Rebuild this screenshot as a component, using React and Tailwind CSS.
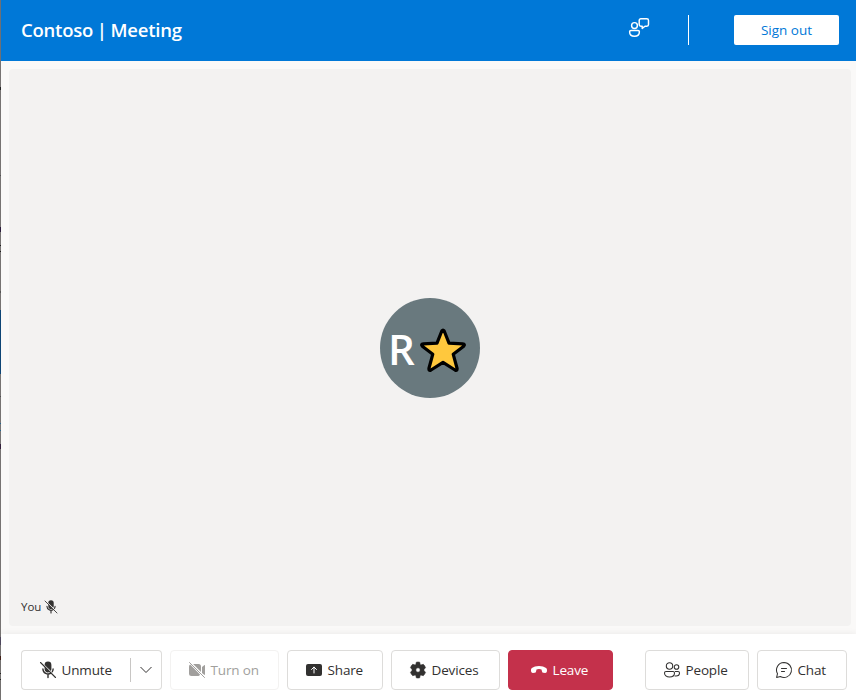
import React from "react";

const edgeMarks = [
  [0, 61, "#6d7075"],
  [61, 26, "#777473"],
  [87, 3, "#252525"],
  [90, 85, "#777473"],
  [175, 1, "#525252"],
  [176, 51, "#777473"],
  [227, 5, "#2b1c3c"],
  [232, 13, "#777473"],
  [245, 1, "#1c1c1c"],
  [246, 5, "#777473"],
  [251, 1, "#1c1c1c"],
  [252, 39, "#777473"],
  [291, 2, "#555555"],
  [293, 17, "#777473"],
  [310, 64, "#0f4676"],
  [374, 22, "#777473"],
  [396, 1, "#505050"],
  [397, 26, "#777473"],
  [423, 1, "#24658f"],
  [424, 6, "#777473"],
  [430, 1, "#24658f"],
  [431, 13, "#777473"],
  [444, 5, "#33203b"],
  [449, 188, "#777473"],
  [637, 8, "#514a60"],
  [645, 11, "#777473"],
  [656, 4, "#442018"],
  [660, 13, "#777473"],
  [673, 1, "#252525"],
  [674, 5, "#777473"],
  [679, 1, "#252525"],
  [680, 20, "#777473"],
];

function Icon({ className = "h-5 w-5", children }) {
  return (
    <svg viewBox="0 0 20 20" className={`shrink-0 ${className}`} fill="currentColor">
      {children}
    </svg>
  );
}

function MicOffIcon({ className }) {
  return (
    <Icon className={className}>
      <path d="M6.600 4.900V5a3.400 3.400 0 0 1 6.800 0v4c0 .8-.2 1.400-.5 1.900L6.600 4.900Z" />
      <path d="M6.600 7 11.700 12.100A3.400 3.400 0 0 1 6.600 9Z" />
      <path
        d="M4.900 9a5.100 5.100 0 0 0 8 4.100M15.100 9c0 1-.3 1.950-.8 2.750M10 14v3.500"
        fill="none"
        stroke="currentColor"
        strokeLinecap="round"
        strokeWidth="1.400"
      />
      <path d="m2.500 2.500 15 15" fill="none" stroke="currentColor" strokeLinecap="round" strokeWidth="1.100" />
    </Icon>
  );
}

function VideoOffIcon() {
  return (
    <Icon>
      <path d="M3.200 4.600 13 14.400a2.500 2.500 0 0 1-1.500 1.600h-7A2.500 2.500 0 0 1 2 13.500v-7c0-.8.450-1.500 1.200-1.900Z" />
      <path d="M6.100 4h5.400A2.500 2.500 0 0 1 14 6.500v5.400Z" />
      <path d="m15 6.900 2.200-1.750A.5.5 0 0 1 18 5.550v8.900c0 .4-.450.650-.8.4L15 13Z" />
      <path d="m2.500 2.500 15 15" fill="none" stroke="currentColor" strokeLinecap="round" />
    </Icon>
  );
}

function ShareIcon() {
  return (
    <Icon>
      <rect x="2" y="4" width="16" height="12" rx="2" />
      <path
        d="M10 13V7.200M7.500 9.500 10 7l2.500 2.500"
        fill="none"
        stroke="white"
        strokeLinecap="round"
        strokeLinejoin="round"
        strokeWidth="1"
      />
    </Icon>
  );
}

function GearIcon() {
  return (
    <Icon>
      <path
        fillRule="evenodd"
        stroke="currentColor"
        strokeWidth="0.600"
        strokeLinejoin="round"
        d="M8.300 2.200Q10 1.800 11.700 2.200L12.100 4.200Q12.300 4.900 13 4.900L15.300 4.300Q16.900 5.700 17.500 7.700L16.100 9.200Q15.600 10 16.100 10.800L17.500 12.300Q16.900 14.300 15.300 15.700L13 15.100Q12.300 15.100 12.100 15.800L11.700 17.800Q10 18.200 8.300 17.800L7.900 15.800Q7.700 15.100 7 15.100L4.700 15.700Q3.100 14.300 2.500 12.300L3.900 10.800Q4.400 10 3.900 9.200L2.500 7.700Q3.100 5.700 4.700 4.300L7 4.900Q7.700 4.900 7.900 4.200ZM10 7.800a2.200 2.200 0 1 0 0 4.400 2.200 2.200 0 0 0 0-4.400Z"
      />
    </Icon>
  );
}

function HangUpIcon() {
  return (
    <Icon>
      <path d="M17.960 10.940l-.160.830c-.150.780-.870 1.280-1.700 1.180l-1.630-.200c-.720-.090-1.260-.610-1.470-1.350l-.500-1.800A6 6 0 0 0 10 9.100a6 6 0 0 0-2.500.5L7.050 11.400c-.180.740-.730 1.260-1.450 1.350l-1.640.200c-.830.100-1.560-.400-1.760-1.180l-.160-.830c-.200-1.100.100-2.200.900-2.940C4.700 6.700 7 6 10 6s5.200.7 7.060 2c.8.740 1.100 1.840.9 2.940Z" />
    </Icon>
  );
}

function PeopleIcon() {
  return (
    <Icon>
      <g fill="none" stroke="currentColor" strokeWidth="1.050">
        <circle cx="7.500" cy="6" r="3.200" />
        <circle cx="14.500" cy="7" r="2.300" />
        <path d="M4 11.500h7c.83 0 1.500.67 1.500 1.500 0 2.400-2 4-5 4s-5-1.600-5-4c0-.83.67-1.500 1.500-1.500Z" />
        <path d="M13 11.500h3c.83 0 1.500.67 1.500 1.500 0 2-1.400 3-3.500 3-.5 0-1-.05-1.400-.2" />
      </g>
    </Icon>
  );
}

function ChatIcon() {
  return (
    <Icon>
      <path
        d="M10 2.500a7.500 7.500 0 1 1-3.600 14.080L2.600 17.500l.9-3.800A7.500 7.500 0 0 1 10 2.500ZM7.500 8.500h5M7.500 11.500h3"
        fill="none"
        stroke="currentColor"
        strokeLinecap="round"
        strokeLinejoin="round"
        strokeWidth="1.050"
      />
    </Icon>
  );
}

function FeedbackIcon() {
  return (
    <svg viewBox="0 0 22 20" className="h-5 w-[22px] shrink-0" fill="none" stroke="white" strokeWidth="1.450">
      <circle cx="6.500" cy="7.500" r="2.900" />
      <path d="M3 12.500h7c.8 0 1.400.6 1.400 1.300 0 2.700-2 4.500-4.900 4.500s-4.900-1.800-4.900-4.500c0-.7.600-1.300 1.400-1.300Z" />
      <path
        d="M12.900.8h5.900c1 0 1.700.7 1.700 1.700v4c0 1-.7 1.700-1.700 1.700h-1.800l-2.800 2.200V8.200h-1.300c-1 0-1.700-.7-1.700-1.700v-4c0-1 .7-1.700 1.700-1.700Z"
        strokeLinejoin="round"
      />
    </svg>
  );
}

function ControlButton({ icon, label, className }) {
  return (
    <button className={`flex h-10 shrink-0 items-center rounded border ${className}`}>
      {icon}
      <span className="ml-[3.500px] whitespace-nowrap">{label}</span>
    </button>
  );
}

export default function App() {
  return (
    <div className="flex h-[700px] w-[856px] overflow-hidden bg-[#faf9f8] font-['Open_Sans','Noto_Sans',sans-serif] text-[#323130]">
      <div className="flex w-px shrink-0 flex-col">
        {edgeMarks.map(([top, height, color]) => (
          <div key={top} className="w-px shrink-0" style={{ height, backgroundColor: color }} />
        ))}
      </div>
      <div className="flex min-w-0 flex-1 flex-col">
        <header className="flex h-[61px] shrink-0 items-center bg-[#0078d7] pr-[17px] pb-px pl-5 text-white">
          <h1 className="text-[18.500px] leading-6 font-semibold tracking-[-0.220px] [word-spacing:-0.900px] whitespace-nowrap">
            Contoso | Meeting
          </h1>
          <div className="ml-auto flex items-center">
            <div className="-mt-[5px]">
              <FeedbackIcon />
            </div>
            <div className="ml-[38px] h-[30px] w-px bg-white" />
            <button className="ml-[45px] h-[30px] w-[105px] rounded-[2px] bg-white text-[13.500px] leading-5 text-[#0078d7]">
              Sign out
            </button>
          </div>
        </header>

        <main className="flex min-h-0 flex-1 p-2 pr-[5px]">
          <section className="flex flex-1 flex-col rounded bg-[#f3f2f1]">
            <div className="flex flex-1 items-center justify-center pt-[39px]">
              <div className="flex h-[100px] w-[100px] items-center rounded-full bg-[#69797e] pl-2 text-white">
                <span className="w-[30px] pt-0.5 text-[42px] leading-none font-semibold">R</span>
                <svg viewBox="0 0 50 50" className="mt-1 h-[50px] w-[50px] shrink-0">
                  <path
                    d="M23.800 6Q25 4.200 26.200 6L31 18.200 44.700 18.900Q47.500 19.200 45.700 21.200L35.200 29.200 39.100 43.500Q39.400 46.200 37 45L25 37.400 13 45Q10.600 46.200 10.900 43.500L14.800 29.200 4.300 21.200Q2.500 19.200 5.300 18.900L19 18.200Z"
                    fill="#ffc83d"
                    stroke="black"
                    strokeWidth="3.200"
                    strokeLinejoin="round"
                  />
                </svg>
              </div>
            </div>
            <div className="flex h-[39px] shrink-0 items-center pl-3 text-[11.500px]">
              <span>You</span>
              <MicOffIcon className="ml-0.5 h-4 w-4" />
            </div>
          </section>
        </main>

        <footer className="flex h-[66px] shrink-0 items-start bg-white pt-4 pr-[9px] pl-5 text-[13.500px] leading-5 tracking-[-0.150px] shadow-[0_0_7px_rgba(0,0,0,0.070)]">
          <div className="flex shrink-0">
            <ControlButton
              icon={<MicOffIcon />}
              label="Unmute"
              className="w-[110px] rounded-r-none border-r-0 border-[#dddcda] pl-4"
            />
            <div className="flex h-10 w-[31px] items-center rounded-r border border-l-0 border-[#dddcda]">
              <div className="-ml-px h-6 w-px bg-[#c8c6c4]" />
              <svg viewBox="0 0 12 8" className="ml-[9px] h-2 w-3" fill="none" stroke="currentColor">
                <path d="m.5 1 5.500 5.500L11.500 1" />
              </svg>
            </div>
          </div>
          <ControlButton
            icon={<VideoOffIcon />}
            label="Turn on"
            className="ml-2 w-[109px] border-[#f3f2f1] pl-4 text-[#a19f9d]"
          />
          <ControlButton icon={<ShareIcon />} label="Share" className="ml-2 w-24 border-[#dddcda] pl-4" />
          <ControlButton icon={<GearIcon />} label="Devices" className="ml-2 w-[109px] border-[#dddcda] pl-4" />
          <ControlButton
            icon={<HangUpIcon />}
            label="Leave"
            className="ml-2 w-[105px] border-[#c4314b] bg-[#c4314b] pl-5 text-white"
          />
          <ControlButton icon={<PeopleIcon />} label="People" className="ml-auto w-[104px] border-[#dddcda] pl-4" />
          <ControlButton icon={<ChatIcon />} label="Chat" className="ml-2 w-[90px] border-[#dddcda] pl-4" />
        </footer>
      </div>
    </div>
  );
}
